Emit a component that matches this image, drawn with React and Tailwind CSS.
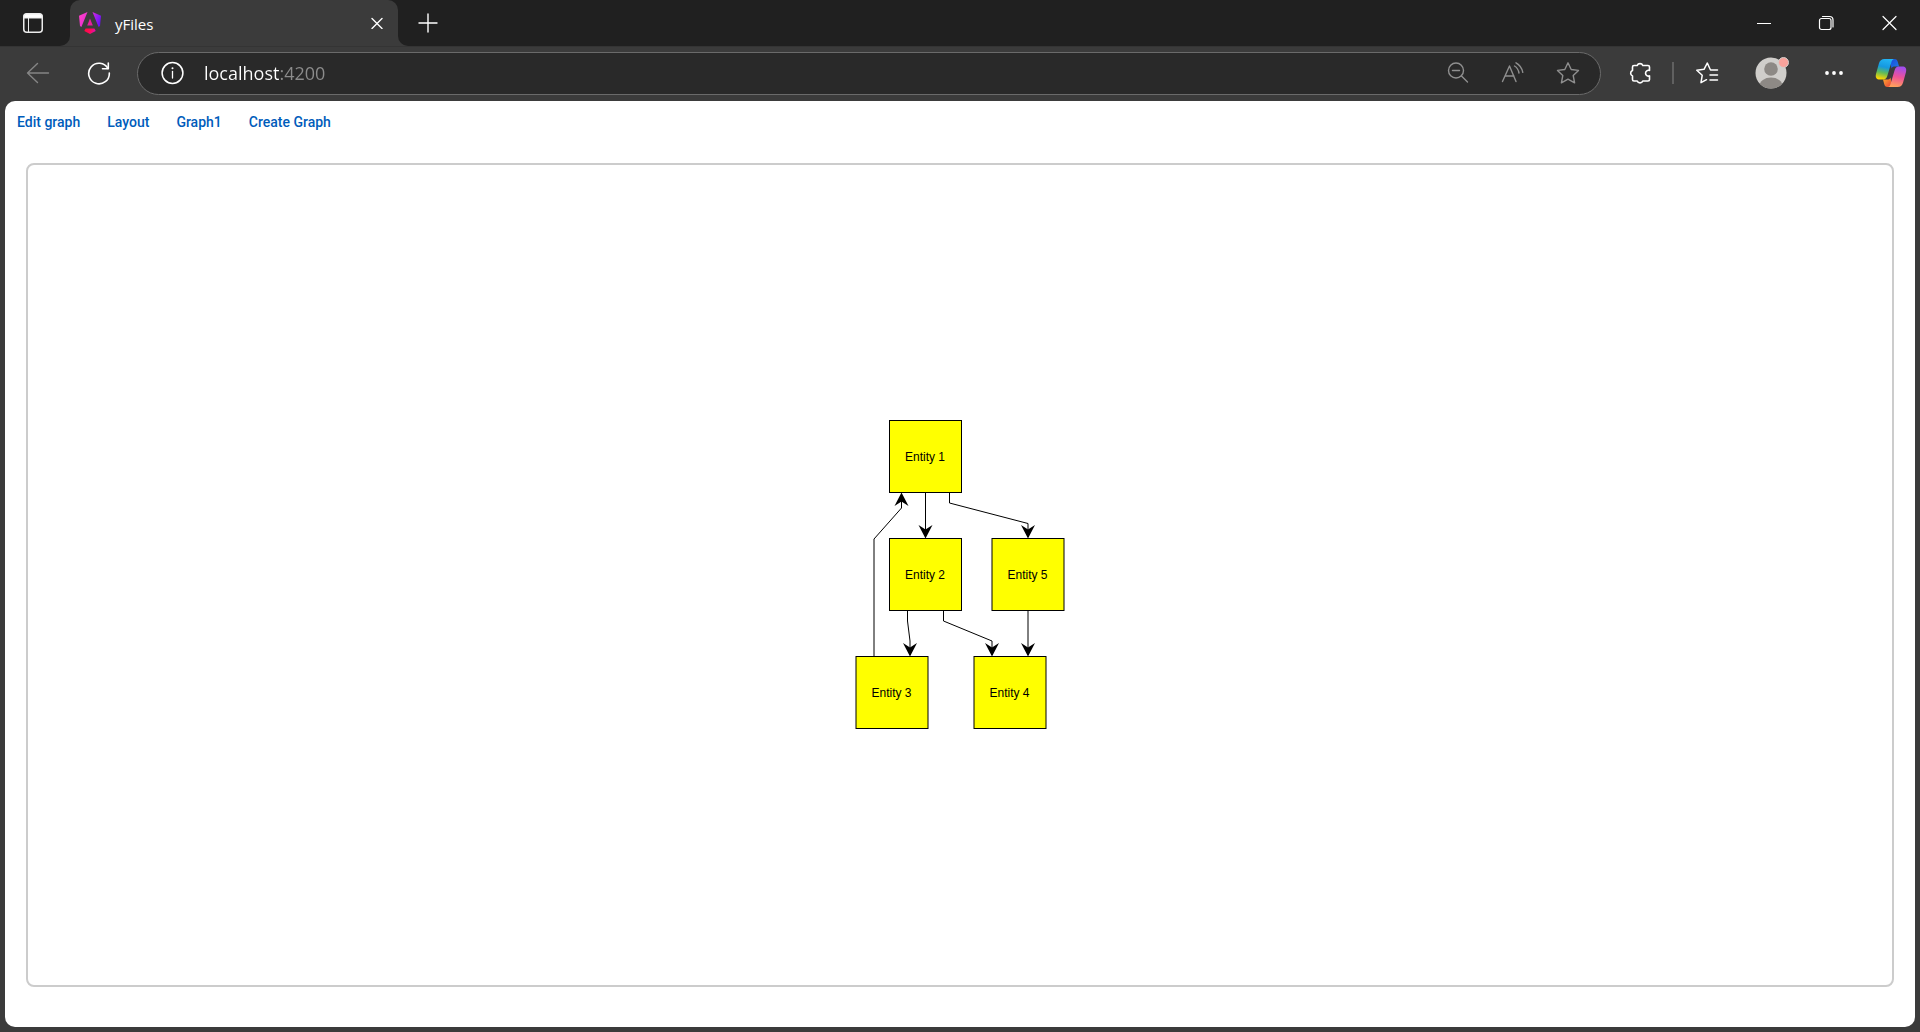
const menuItems = ['Edit graph', 'Layout', 'Graph1', 'Create Graph'];

const nodes = [
  { label: 'Entity 1', x: 34.5, y: 0.5 },
  { label: 'Entity 2', x: 34.5, y: 118.5 },
  { label: 'Entity 5', x: 137, y: 118.5 },
  { label: 'Entity 3', x: 1, y: 236.5 },
  { label: 'Entity 4', x: 119, y: 236.5 },
];

const edges = [
  '19,236.5 19,119 46.5,88 46.5,74',
  '70.5,72.5 70.5,117',
  '94.5,72.5 94.5,83 173,103.5 173,117',
  '52.5,190.5 52.5,201 55,221 55,235',
  '88.5,190.5 88.5,201 137,221 137,235',
  '173,190.5 173,235',
];

const arrows = [
  [46.5, 72.5, 180],
  [70.5, 118.5, 0],
  [173, 118.5, 0],
  [55, 236.5, 0],
  [137, 236.5, 0],
  [173, 236.5, 0],
];

function Icon({ size = 24, children }) {
  return (
    <svg
      width={size}
      height={size}
      viewBox={`0 0 ${size} ${size}`}
      fill="none"
      stroke="currentColor"
      strokeWidth="1.4"
      strokeLinecap="round"
      strokeLinejoin="round"
      aria-hidden="true"
    >
      {children}
    </svg>
  );
}

function IconButton({ label, className, children }) {
  return (
    <button type="button" aria-label={label} className={`flex shrink-0 items-center justify-center ${className}`}>
      {children}
    </button>
  );
}

function AngularLogo() {
  return (
    <svg width="22" height="22" viewBox="0 0 22 22" aria-hidden="true">
      <defs>
        <linearGradient id="ngA" x1="0" y1="0.3" x2="1" y2="0.6">
          <stop offset="0" stopColor="#ff41c8" />
          <stop offset="0.45" stopColor="#e22ad2" />
          <stop offset="0.75" stopColor="#9a1ff0" />
          <stop offset="1" stopColor="#6a10f5" />
        </linearGradient>
        <linearGradient id="ngB" x1="0" y1="0" x2="1" y2="0.2">
          <stop offset="0" stopColor="#ff0a3c" />
          <stop offset="0.6" stopColor="#ff0a5c" />
          <stop offset="1" stopColor="#e010b0" />
        </linearGradient>
      </defs>
      <path d="M8.500 0 2.400 15 1 14 0 3.800zM13.500 0 22 3.800 21 14l-1.400 1z" fill="url(#ngA)" />
      <path d="M11 6.600l2.800 6.800H8.200z" fill="#e81f9e" />
      <path d="M6.600 16.500h8.800l1.300 2.500L11 22l-5.700-3z" fill="url(#ngB)" />
    </svg>
  );
}

function CopilotLogo() {
  return (
    <svg width="32" height="30" viewBox="0 0 32 30" aria-hidden="true">
      <defs>
        <linearGradient id="cpBlue" x1="0.6" y1="0" x2="0.4" y2="1">
          <stop offset="0" stopColor="#22b4f4" />
          <stop offset="0.4" stopColor="#1598e0" />
          <stop offset="0.68" stopColor="#5fba5a" />
          <stop offset="1" stopColor="#ffd500" />
        </linearGradient>
        <linearGradient id="cpPink" x1="0.6" y1="0" x2="0.4" y2="1">
          <stop offset="0" stopColor="#a04df0" />
          <stop offset="0.5" stopColor="#ee5298" />
          <stop offset="1" stopColor="#ffa25a" />
        </linearGradient>
        <linearGradient id="cpDeep" x1="0" y1="0" x2="1" y2="1">
          <stop offset="0" stopColor="#1b48d8" />
          <stop offset="1" stopColor="#1f7ce8" />
        </linearGradient>
        <linearGradient id="cpRed" x1="0" y1="0" x2="1" y2="1">
          <stop offset="0" stopColor="#ffb02e" />
          <stop offset="1" stopColor="#e83a3a" />
        </linearGradient>
      </defs>
      <path d="M15 1h4.500c2 0 2.800 1.200 3.300 3l1.300 4.500H20c-2 0-3 .4-3.600 2z" fill="url(#cpDeep)" />
      <path d="M17 29h-4.500c-2 0-2.800-1.200-3.300-3L8 21.500h4c2 0 3-.4 3.600-2z" fill="url(#cpRed)" />
      <path
        d="M9.500 1H19c-1.400.4-2.100 1.600-2.600 3.300L12.300 18c-.7 2.300-1.800 3.500-4 3.500H4.800c-3.300 0-4.700-2-3.800-5.500l2.900-10.500C4.800 2.500 6.500 1 9.500 1z"
        fill="url(#cpBlue)"
      />
      <path
        d="M22.500 29H13c1.400-.4 2.100-1.600 2.600-3.300L19.700 12c.7-2.300 1.800-3.500 4-3.500h3.500c3.300 0 4.700 2 3.800 5.500l-2.900 10.500c-.9 3-2.600 4.500-5.600 4.500z"
        fill="url(#cpPink)"
      />
    </svg>
  );
}

function TitleBar() {
  return (
    <header className="flex h-[46px] items-stretch text-white">
      <div className="flex w-[70px] items-center justify-center rounded-br-[10px] bg-[#202020]">
        <IconButton label="Tab actions" className="h-8 w-8 pr-1">
          <svg width="20" height="20" viewBox="0 0 20 20" fill="none" stroke="#ececec" aria-hidden="true">
            <rect x="0.750" y="0.750" width="18.500" height="18.500" rx="3" strokeWidth="1.500" />
            <path d="M1 5V3q0-2 2-2h14q2 0 2 2v2z" fill="#fff" />
            <path d="M5.500 5v14" />
          </svg>
        </IconButton>
      </div>
      <div className="w-[328px] bg-[#202020]">
        <div className="flex h-full items-center rounded-t-[10px] bg-[#3b3b3b] pr-[9px] pl-[9px]">
          <AngularLogo />
          <span className="ml-[14px] flex-1 pt-px font-['Open_Sans',sans-serif] text-[15px] leading-5">yFiles</span>
          <IconButton label="Close tab" className="h-6 w-6">
            <Icon size={12}>
              <path d="M1 1.500l10 10M11 1.500l-10 10" />
            </Icon>
          </IconButton>
        </div>
      </div>
      <div className="flex flex-1 items-center justify-between rounded-bl-[10px] bg-[#202020]">
        <IconButton label="New tab" className="ml-3 h-9 w-9">
          <Icon size={20}>
            <path d="M10 1v18M1 10h18" />
          </Icon>
        </IconButton>
        <div className="flex h-full">
          <IconButton label="Minimize" className="w-[63px]">
            <Icon size={16}>
              <path d="M2 8.500h14" strokeWidth="1" strokeLinecap="butt" />
            </Icon>
          </IconButton>
          <IconButton label="Restore" className="w-[63px]">
            <Icon size={16}>
              <rect x="1.500" y="3.500" width="11.500" height="11" rx="2" strokeWidth="1.200" />
              <path d="M4.500 1.500h7q3.500 0 3.500 3.500v7" strokeWidth="1.200" />
            </Icon>
          </IconButton>
          <IconButton label="Close window" className="w-[63px]">
            <Icon size={16}>
              <path d="M2 1.500l13 13M15 1.500l-13 13" strokeWidth="1.200" />
            </Icon>
          </IconButton>
        </div>
      </div>
    </header>
  );
}

function Toolbar() {
  return (
    <div className="flex h-[55px] items-center border-t border-[#343434] pr-[13px] pb-0.5 text-white">
      <IconButton label="Back" className="ml-5 h-9 w-9 text-[#858585]">
        <Icon>
          <path d="M22.500 12H1.500M11.500 2.500l-10 9.500 10 9.500" />
        </Icon>
      </IconButton>
      <IconButton label="Refresh" className="ml-[25px] h-9 w-9">
        <Icon>
          <path d="M21 7.500A10.300 10.300 0 1 0 22.300 12" strokeWidth="1.600" />
          <path d="M21.300 2v5.800h-5.800" strokeWidth="1.600" />
        </Icon>
      </IconButton>
      <div className="ml-5 flex h-[43px] flex-1 items-center rounded-full border border-[#6a6a6a] bg-[#292929] pr-[14px] pl-[17px]">
        <IconButton label="View site information" className="h-9 w-9">
          <Icon>
            <circle cx="11.500" cy="12" r="10.400" strokeWidth="1.500" />
            <path d="M11.500 10.500V17" strokeWidth="1.300" />
            <circle cx="11.500" cy="7.300" r="1" fill="currentColor" stroke="none" />
          </Icon>
        </IconButton>
        <input
          aria-label="Address"
          defaultValue="localhost:4200"
          className="ml-[13px] h-7 min-w-0 flex-1 bg-[linear-gradient(90deg,#ffffff_76px,#8c8c8c_76px)] bg-clip-text font-['Open_Sans',sans-serif] text-[18px] text-transparent outline-none"
        />
        <div className="flex items-center gap-[19px] text-[#8f8f8f]">
          <IconButton label="Zoom" className="h-9 w-9">
            <Icon>
              <circle cx="10" cy="9.500" r="7.500" />
              <path d="M15.500 15l6 6M6.500 9.500h7" />
            </Icon>
          </IconButton>
          <IconButton label="Read aloud" className="h-9 w-9">
            <Icon>
              <path d="M1.500 20.500L8.500 5l6.500 15.500M4 15h9" />
              <path d="M13.500 5q3.500 2 4.500 7M15 1.800q5.500 3 6.800 9.500" />
            </Icon>
          </IconButton>
          <IconButton label="Add to favorites" className="h-9 w-9">
            <Icon>
              <path d="M12 1.800l3.200 6.700 7.300.9-5.300 5.100 1.400 7.300L12 18.200l-6.600 3.600 1.400-7.300L1.500 9.400l7.300-.9z" />
            </Icon>
          </IconButton>
        </div>
      </div>
      <IconButton label="Extensions" className="ml-[21px] h-9 w-9">
        <Icon>
          <path
            d="M4.500 6q0-1.500 1.500-1.500H9.200a3 3 0 0 1 5.600 0H20q1.500 0 1.500 1.500V9.500a2.900 2.900 0 1 0 0 5.400V18.500q0 1.500-1.500 1.500h-5.200a3 3 0 0 1-5.600 0H6Q4.500 20 4.500 18.500v-3.600a2.900 2.900 0 0 1 0-5.400z"
            strokeWidth="1.600"
          />
        </Icon>
      </IconButton>
      <div className="ml-[14px] h-[22px] w-[2px] bg-[#606060]" />
      <IconButton label="Favorites" className="ml-[15px] h-9 w-9">
        <Icon>
          <path
            d="M22.500 9h-7L12.300 2 9 8.300 1.800 9.300l5.400 5L6 21.700l5.500-3M15 14h7.500M15 19h7.500"
            strokeWidth="1.500"
          />
        </Icon>
      </IconButton>
      <IconButton label="Profile" className="relative ml-[28px] h-9 w-9">
        <svg width="32" height="32" viewBox="0 0 32 32" aria-hidden="true">
          <clipPath id="avatar">
            <circle cx="16" cy="16" r="15.500" />
          </clipPath>
          <g clipPath="url(#avatar)">
            <rect width="32" height="32" fill="#d0cecb" />
            <circle cx="16" cy="12" r="6.800" fill="#8d8985" />
            <ellipse cx="16" cy="29" rx="11.500" ry="8.500" fill="#8d8985" />
          </g>
        </svg>
        <span className="absolute top-0.5 right-0 h-[11px] w-[11px] rounded-full border border-[#d0cecb] bg-[#f8a29b]" />
      </IconButton>
      <IconButton label="Settings and more" className="ml-[27px] h-9 w-9">
        <Icon>
          <g fill="currentColor" stroke="none">
            <circle cx="5" cy="12" r="1.900" />
            <circle cx="12" cy="12" r="1.900" />
            <circle cx="19" cy="12" r="1.900" />
          </g>
        </Icon>
      </IconButton>
      <IconButton label="Copilot" className="ml-[23px] h-9 w-8">
        <CopilotLogo />
      </IconButton>
    </div>
  );
}

function Graph() {
  return (
    <svg
      width="210"
      height="310"
      viewBox="0 0 210 310"
      role="img"
      aria-label="Entity graph"
      className="overflow-visible font-['Liberation_Sans',Arial,sans-serif] text-[12px]"
    >
      {edges.map((points) => (
        <polyline key={points} points={points} fill="none" stroke="#000" />
      ))}
      {nodes.map(({ label, x, y }) => (
        <g key={label}>
          <rect x={x} y={y} width="72" height="72" fill="#ffff00" stroke="#000" />
          <text x={x + 35.5} y={y + 40} textAnchor="middle" fill="#000">
            {label}
          </text>
        </g>
      ))}
      {arrows.map(([x, y, angle]) => (
        <path
          key={`${x}-${y}`}
          d="M0 0L-7-13.500L0-9L7-13.500z"
          transform={`translate(${x} ${y}) rotate(${angle})`}
        />
      ))}
    </svg>
  );
}

export default function App() {
  return (
    <div className="flex h-screen flex-col bg-[#3b3b3b]">
      <TitleBar />
      <Toolbar />
      <main className="mx-[5px] mb-[5px] flex min-h-0 flex-1 flex-col rounded-[10px] bg-white">
        <nav className="flex h-[42px] items-center gap-[3px] font-['Roboto',sans-serif] text-[14px] leading-5 font-medium text-[#005cbb]">
          {menuItems.map((item) => (
            <button key={item} type="button" className="px-3">
              {item}
            </button>
          ))}
        </nav>
        <section className="mx-[21px] mt-5 mb-10 flex flex-1 items-center justify-center rounded-lg border-2 border-[#cccccc]">
          <Graph />
        </section>
      </main>
    </div>
  );
}
